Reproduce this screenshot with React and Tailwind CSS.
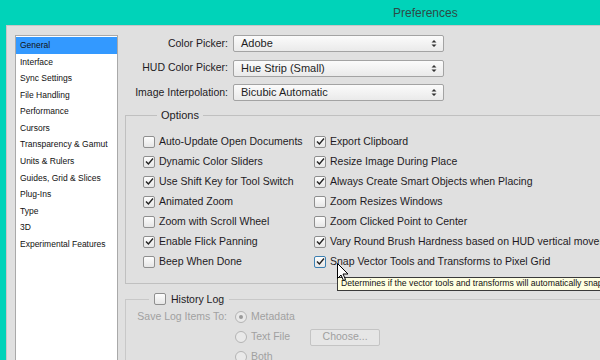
import React from 'react';

const font = { fontFamily: '"Liberation Sans", Arial, sans-serif' };

const sidebarItems = [
  'General',
  'Interface',
  'Sync Settings',
  'File Handling',
  'Performance',
  'Cursors',
  'Transparency & Gamut',
  'Units & Rulers',
  'Guides, Grid & Slices',
  'Plug-Ins',
  'Type',
  '3D',
  'Experimental Features',
];

const leftOptions = [
  ['Auto-Update Open Documents', false],
  ['Dynamic Color Sliders', true],
  ['Use Shift Key for Tool Switch', true],
  ['Animated Zoom', true],
  ['Zoom with Scroll Wheel', false],
  ['Enable Flick Panning', true],
  ['Beep When Done', false],
];

const rightOptions = [
  ['Export Clipboard', true],
  ['Resize Image During Place', true],
  ['Always Create Smart Objects when Placing', true],
  ['Zoom Resizes Windows', false],
  ['Zoom Clicked Point to Center', false],
  ['Vary Round Brush Hardness based on HUD vertical movement', true],
  ['Snap Vector Tools and Transforms to Pixel Grid', true, true],
];

function Checkbox({ checked, focused }) {
  return (
    <div
      className={
        'w-[12px] h-[12px] shrink-0 rounded-[2px] border bg-gradient-to-b from-[#fdfdfd] to-[#e6e6e6] flex items-center justify-center ' +
        (focused ? 'border-[#3c7fb1]' : 'border-[#8f8f8f]')
      }
    >
      {checked && (
        <svg width="9" height="9" viewBox="0 0 9 9">
          <path d="M1 4.5 L3.4 7 L8 1.5" fill="none" stroke="#222" strokeWidth="1.4" />
        </svg>
      )}
    </div>
  );
}

function Radio({ checked }) {
  return (
    <div className="w-[12px] h-[12px] shrink-0 rounded-full border border-[#b4b4b4] bg-[#e9e9e9] flex items-center justify-center">
      {checked && <div className="w-[4px] h-[4px] rounded-full bg-[#9a9a9a]" />}
    </div>
  );
}

function Select({ value }) {
  return (
    <div className="w-[211px] h-[17px] rounded-[2px] border border-[#a3a3a3] bg-gradient-to-b from-[#fbfbfb] to-[#eaeaea] flex items-center pl-[7px] pr-[6px]">
      <span className="flex-1 text-[11px] text-[#1e1e1e]">{value}</span>
      <svg width="6" height="9" viewBox="0 0 6 9">
        <path d="M0.5 3.5 L3 1 L5.5 3.5 Z M0.5 5.5 L3 8 L5.5 5.5 Z" fill="#333" />
      </svg>
    </div>
  );
}

function OptionRow({ label, checked, focused }) {
  return (
    <div className="h-[20px] flex items-center gap-[4px] whitespace-nowrap">
      <Checkbox checked={checked} focused={focused} />
      <span className="text-[10.5px] text-[#1e1b24]">{label}</span>
    </div>
  );
}

export default function App() {
  return (
    <div className="w-[600px] h-[360px] overflow-hidden bg-[#00d3b9] flex flex-col relative" style={font}>
      <div className="h-[25px] shrink-0 flex items-center pl-[393px] text-[12px] text-[#2d4a46]">
        Preferences
      </div>
      <div className="flex-1 ml-[6px] bg-[#e0e0e0] border-l border-t border-[#c7c7c7] flex">
        <div className="ml-[8px] mt-[9px] w-[103px] shrink-0 bg-white border border-[#a9a9a9] pt-[1px]">
          {sidebarItems.map((item, i) => (
            <div
              key={item}
              className={
                'h-[16.6px] flex items-center pl-[4px] text-[8.5px] whitespace-nowrap ' +
                (i === 0 ? 'bg-[#3399ff] text-[#111]' : 'text-[#111]')
              }
            >
              {item}
            </div>
          ))}
        </div>

        <div className="flex-1 pl-[7px] pt-[9px] min-w-0">
          <div className="flex flex-col gap-[7.5px]">
            {[
              ['Color Picker:', 'Adobe'],
              ['HUD Color Picker:', 'Hue Strip (Small)'],
              ['Image Interpolation:', 'Bicubic Automatic'],
            ].map(([label, value]) => (
              <div key={label} className="flex items-center gap-[5px]">
                <span className="w-[103px] text-right text-[10.5px] text-[#1e1b24] whitespace-nowrap">
                  {label}
                </span>
                <Select value={value} />
              </div>
            ))}
          </div>

          <fieldset className="mt-[6px] border border-[#c0c0c0] w-[520px] pl-[17px] pb-[11px] pt-[8px]">
            <legend className="ml-[14px] px-[4px] text-[11px] text-[#1e1b24]">Options</legend>
            <div className="flex">
              <div className="w-[171px] flex flex-col">
                {leftOptions.map(([l, c]) => (
                  <OptionRow key={l} label={l} checked={c} />
                ))}
              </div>
              <div className="flex flex-col">
                {rightOptions.map(([l, c, f]) => (
                  <OptionRow key={l} label={l} checked={c} focused={f} />
                ))}
              </div>
            </div>
          </fieldset>

          <fieldset className="mt-[8px] border border-[#c8c8c8] w-[520px] h-[80px] pl-[9px]">
            <legend className="ml-[14px] px-[5px] flex items-center gap-[5px] text-[10.5px] text-[#1e1b24]">
              <Checkbox checked={false} />
              <span>History Log</span>
            </legend>
            <div className="flex">
              <span className="w-[92px] h-[20px] flex items-center justify-end text-[10.5px] text-[#a0a0a0] whitespace-nowrap">
                Save Log Items To:
              </span>
              <div className="ml-[8px] flex flex-col">
                <div className="h-[20px] flex items-center gap-[4px] text-[10.5px] text-[#a0a0a0]">
                  <Radio checked /> Metadata
                </div>
                <div className="h-[20px] flex items-center gap-[4px] text-[10.5px] text-[#a0a0a0]">
                  <Radio /> Text File
                  <div className="ml-[16px] w-[70px] h-[17px] rounded-[2px] border border-[#c4c4c4] bg-[#e6e6e6] flex items-center justify-center text-[#a0a0a0]">
                    Choose...
                  </div>
                </div>
                <div className="h-[20px] flex items-center gap-[4px] text-[10.5px] text-[#a0a0a0]">
                  <Radio /> Both
                </div>
              </div>
            </div>
          </fieldset>
        </div>
      </div>

      <div className="absolute left-[337px] top-[277px] h-[14px] w-[300px] bg-[#ffffe1] border border-[#3a3a3a] pl-[3px] flex items-center text-[8.7px] text-[#111] whitespace-nowrap">
        Determines if the vector tools and transforms will automatically snap shapes and paths to the pixel grid
      </div>

      <svg className="absolute left-[337px] top-[263px]" width="12" height="19" viewBox="0 0 12 19">
        <path d="M0.5 0.5 L0.5 15.5 L4 12 L6.5 17.5 L8.5 16.5 L6 11 L11 11 Z" fill="#fff" stroke="#000" strokeWidth="1" />
      </svg>
    </div>
  );
}
